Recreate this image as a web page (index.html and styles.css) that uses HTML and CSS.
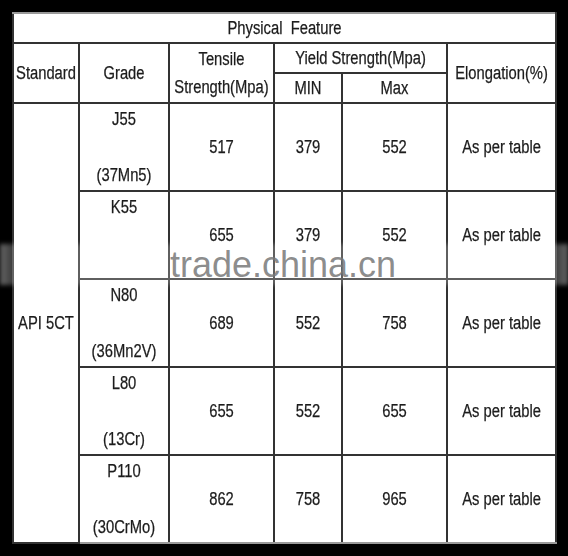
FILE: index.html
```html
<!DOCTYPE html>
<html>
<head>
<meta charset="utf-8">
<link rel="stylesheet" href="styles.css">
</head>
<body>
<div class="frame">
  <table class="spec">
    <colgroup>
      <col class="c-std"><col class="c-grade"><col class="c-ten"><col class="c-min"><col class="c-max"><col class="c-el">
    </colgroup>
    <tr class="r-title"><th colspan="6"><div class="t">Physical&nbsp; Feature</div></th></tr>
    <tr class="r-h1">
      <th rowspan="2"><div class="t">Standard</div></th>
      <th rowspan="2"><div class="t">Grade</div></th>
      <th rowspan="2" class="two"><div class="t">Tensile<br>Strength(Mpa)</div></th>
      <th colspan="2"><div class="t">Yield Strength(Mpa)</div></th>
      <th rowspan="2"><div class="t">Elongation(%)</div></th>
    </tr>
    <tr class="r-h2"><th><div class="t">MIN</div></th><th><div class="t">Max</div></th></tr>
    <tr class="r-d">
      <td rowspan="5"><div class="t">API 5CT</div></td>
      <td><div class="t">J55<br><br>(37Mn5)</div></td>
      <td><div class="t">517</div></td><td><div class="t">379</div></td><td><div class="t">552</div></td><td><div class="t">As per table</div></td>
    </tr>
    <tr class="r-d">
      <td><div class="t">K55<br><br>&nbsp;</div></td>
      <td><div class="t">655</div></td><td><div class="t">379</div></td><td><div class="t">552</div></td><td><div class="t">As per table</div></td>
    </tr>
    <tr class="r-d">
      <td><div class="t">N80<br><br>(36Mn2V)</div></td>
      <td><div class="t">689</div></td><td><div class="t">552</div></td><td><div class="t">758</div></td><td><div class="t">As per table</div></td>
    </tr>
    <tr class="r-d">
      <td><div class="t">L80<br><br>(13Cr)</div></td>
      <td><div class="t">655</div></td><td><div class="t">552</div></td><td><div class="t">655</div></td><td><div class="t">As per table</div></td>
    </tr>
    <tr class="r-d">
      <td><div class="t">P110<br><br>(30CrMo)</div></td>
      <td><div class="t">862</div></td><td><div class="t">758</div></td><td><div class="t">965</div></td><td><div class="t">As per table</div></td>
    </tr>
  </table>
  <div class="band"></div>
  <div class="mark">trade.china.cn</div>
</div>
</body>
</html>
```
FILE: styles.css
```css
html, body {
  margin: 0;
  padding: 0;
  background: #000;
}
.frame {
  position: relative;
  width: 568px;
  height: 556px;
  padding: 12px 0 0 12px;
  box-sizing: border-box;
  background: #000;
  overflow: hidden;
}
.spec {
  border-collapse: collapse;
  background: #fff;
  font-family: "Liberation Sans", Arial, sans-serif;
  font-size: 18px;
  color: #1c1c1c;
  -webkit-text-stroke: 0.25px #1c1c1c;
  table-layout: fixed;
  width: 543px;
}
.spec th, .spec td {
  border: 2px solid #333;
  padding: 0;
  text-align: center;
  vertical-align: middle;
  font-weight: normal;
  line-height: 28px;
  white-space: nowrap;
}
.t {
  margin: 0 -30px;
  transform: scaleX(0.82);
  transform-origin: 50% 50%;
}
.c-std { width: 66px; }
.c-grade { width: 90px; }
.c-ten { width: 105px; }
.c-min { width: 68px; }
.c-max { width: 105px; }
.c-el { width: 109px; }
.r-title th { height: 28px; border-top-color: #999; }
.r-h1 th { height: 27px; }
.r-h2 th { height: 28px; }
.two { line-height: 30px; }
.r-d td { height: 86px; }
.r-d:last-child td { border-bottom-color: #999; }
.band {
  position: absolute;
  left: 0;
  top: 244px;
  width: 568px;
  height: 41px;
  background: linear-gradient(90deg, rgba(255,255,255,0.4) 0, rgba(255,255,255,0.22) 2.5%, rgba(255,255,255,0.22) 97.5%, rgba(255,255,255,0.4) 100%);
  filter: blur(2px);
}
.mark {
  position: absolute;
  left: 170px;
  top: 250px;
  font-family: "Liberation Sans", Arial, sans-serif;
  font-size: 36px;
  line-height: 30px;
  color: rgba(120,120,120,0.85);
}
```
